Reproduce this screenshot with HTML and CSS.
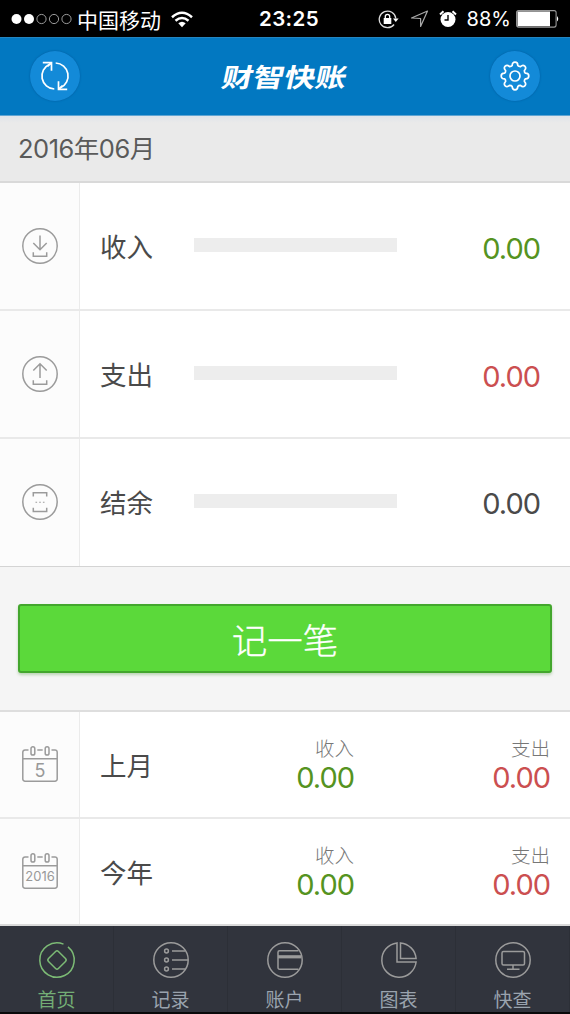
FILE: index.html
```html
<!DOCTYPE html>
<html lang="zh-CN">
<head>
<meta charset="utf-8">
<title>财智快账</title>
<link rel="stylesheet" href="styles.css">
</head>
<body>
<div class="app">
  <div class="status">
    <div class="status-left">
      <svg class="signal" width="62" height="12" viewBox="0 0 62 12"><g fill="#fff"><circle cx="5.500" cy="6" r="5"/><circle cx="18" cy="6" r="5"/></g><g fill="none" stroke="#aaa" stroke-width=".9"><circle cx="30.500" cy="6" r="4.600"/><circle cx="43" cy="6" r="4.600"/><circle cx="55.500" cy="6" r="4.600"/></g></svg>
      <span class="carrier">中国移动</span>
      <svg class="wifi" width="22" height="17" viewBox="0 0 22 17"><g fill="none" stroke="#fff" stroke-width="2.500"><path d="M1 6.200Q11-2.600 21 6.200"/><path d="M4.500 9.800Q11 4.300 17.500 9.800"/></g><path fill="#fff" d="M7.300 12.300Q11 9.300 14.700 12.300L11 16.200Z"/></svg>
    </div>
    <span class="clock">23:25</span>
    <div class="status-right">
      <svg width="21" height="19" viewBox="0 0 21 19"><path d="M16.100 14.500A8.300 8.300 0 1 1 17.800 8.500" fill="none" stroke="#ddd" stroke-width="1.300"/><path d="M15 8.500h5.600L17.800 12z" fill="#fff"/><rect x="5.700" y="8" width="7.600" height="6" fill="#fff"/><path d="M7.300 8V6.500a2.200 2.200 0 0 1 4.400 0V8" fill="none" stroke="#fff" stroke-width="1.300"/></svg>
      <svg class="arrow" width="19" height="18" viewBox="0 0 19 18"><path d="M17.500 1 10.600 16.500V8.500L1.500 8z" fill="none" stroke="#aaa" stroke-width="1.200" stroke-linejoin="round"/></svg>
      <svg class="alarm" width="18" height="18" viewBox="0 0 18 18"><circle cx="9" cy="9.500" r="7.500" fill="#fff"/><path d="M1 4.500 4.500 1.200M17 4.500 13.500 1.200" stroke="#fff" stroke-width="2"/><path d="M9 5v5H5.500" fill="none" stroke="#000" stroke-width="1.400"/></svg>
      <span class="percent">88%</span>
      <svg class="battery" width="44" height="18" viewBox="0 0 44 18"><rect x=".6" y=".6" width="39.500" height="16.500" rx="2" fill="none" stroke="#999" stroke-width="1.100"/><rect x="1.500" y="1.500" width="32.500" height="14.700" fill="#fff"/><path d="M41 6q2.500 2.800 0 5.600z" fill="#fff"/></svg>
    </div>
  </div>

  <header class="header">
    <button class="round" aria-label="sync"><svg width="30" height="30" viewBox="0 0 30 30" fill="none" stroke="#fff" stroke-width="1.700"><path d="M9.500 3.200A13 13 0 0 0 14.300 28M20.500 26.800A13 13 0 0 0 15.700 2"/><path d="M2.800 1.700h8.700v8M27.200 28.300h-8.700v-8M11.500 1.700 7.500 5.500M18.500 28.300 22.500 24.500"/></svg></button>
    <h1 class="logo">财智快账</h1>
    <button class="round" aria-label="settings"><svg width="30" height="30" viewBox="0 0 30 30" fill="none" stroke="#fff" stroke-width="1.700" stroke-linejoin="round"><circle cx="15" cy="15" r="5"/><path d="M12.200 4.500Q12.200 1.200 15 1.200T17.800 4.500Q18.500 5.600 20.500 5.600Q22.900 3.300 24.800 5.200T24.400 9.500Q24.200 11.300 25.500 12.200Q28.800 12.200 28.800 15T25.500 17.800Q24.200 18.700 24.400 20.500Q26.700 22.900 24.800 24.800T20.500 24.400Q18.500 24.400 17.800 25.500Q17.800 28.800 15 28.800T12.200 25.500Q11.500 24.400 9.500 24.400Q7.100 26.700 5.200 24.800T5.600 20.500Q5.800 18.700 4.500 17.800Q1.200 17.800 1.200 15T4.500 12.200Q5.800 11.300 5.600 9.500Q3.300 7.100 5.200 5.200T9.500 5.600Q11.500 5.600 12.200 4.500Z"/></svg></button>
  </header>

  <div class="month">2016年06月</div>

  <section class="summary">
    <div class="row">
      <div class="cell-icon"><svg class="icon" viewBox="0 0 36 36"><circle cx="18" cy="18" r="17.200"/><path d="M18 7.500v14M11.300 15l6.700 6.700 6.700-6.700M11.300 24.300v3.900h13.400v-3.900"/></svg></div>
      <span class="label">收入</span><div class="bar"></div><span class="amount green">0.00</span>
    </div>
    <div class="row">
      <div class="cell-icon"><svg class="icon" viewBox="0 0 36 36"><circle cx="18" cy="18" r="17.200"/><path d="M18 22V7.800M11.300 14.500 18 7.800l6.700 6.700M11.300 24.300v3.900h13.400v-3.900"/></svg></div>
      <span class="label">支出</span><div class="bar"></div><span class="amount red">0.00</span>
    </div>
    <div class="row">
      <div class="cell-icon"><svg class="icon" viewBox="0 0 36 36"><circle cx="18" cy="18" r="17.200"/><path d="M11.300 12.500V8.800h13.400v3.700M11.300 23.800v3.700h13.400v-3.700"/><path d="M13.500 18.200h1.600m2.100 0h1.600m2.100 0h1.600" stroke-width="1.100"/></svg></div>
      <span class="label">结余</span><div class="bar"></div><span class="amount">0.00</span>
    </div>
  </section>

  <div class="action"><button class="add">记一笔</button></div>

  <section class="history">
    <div class="row">
      <div class="cell-icon"><svg class="icon" viewBox="0 0 36 36"><path d="M6.500 4H3a2.200 2.200 0 0 0-2.200 2.200V33A2.200 2.200 0 0 0 3 35.200h30a2.200 2.200 0 0 0 2.200-2.200V6.200A2.200 2.200 0 0 0 33 4h-3.500M15.300 4h5.400M1 12.700h34"/><rect x="9" y=".8" width="3.800" height="8.300" rx="1.900"/><rect x="23.200" y=".8" width="3.800" height="8.300" rx="1.900"/><text x="18" y="30.500" font-size="18">5</text></svg></div>
      <span class="label">上月</span>
      <div class="stat"><span class="caption">收入</span><span class="amount green">0.00</span></div>
      <div class="stat"><span class="caption">支出</span><span class="amount red">0.00</span></div>
    </div>
    <div class="row">
      <div class="cell-icon"><svg class="icon" viewBox="0 0 36 36"><path d="M6.500 4H3a2.200 2.200 0 0 0-2.200 2.200V33A2.200 2.200 0 0 0 3 35.200h30a2.200 2.200 0 0 0 2.200-2.200V6.200A2.200 2.200 0 0 0 33 4h-3.500M15.300 4h5.400M1 12.700h34"/><rect x="9" y=".8" width="3.800" height="8.300" rx="1.900"/><rect x="23.200" y=".8" width="3.800" height="8.300" rx="1.900"/><text x="18" y="28" font-size="13">2016</text></svg></div>
      <span class="label">今年</span>
      <div class="stat"><span class="caption">收入</span><span class="amount green">0.00</span></div>
      <div class="stat"><span class="caption">支出</span><span class="amount red">0.00</span></div>
    </div>
  </section>

  <nav class="tabs">
    <a class="tab active"><svg class="icon" viewBox="0 0 36 36"><path d="M24.500 2.100A17.200 17.200 0 1 0 29 4.800"/><rect x="11" y="11" width="14" height="14" rx="2" transform="rotate(45 18 18)"/></svg><span>首页</span></a>
    <a class="tab"><svg class="icon" viewBox="0 0 36 36"><circle cx="18" cy="18" r="17.200"/><circle cx="13.500" cy="9" r="1.900"/><circle cx="13.500" cy="18" r="1.900"/><circle cx="13.500" cy="27" r="1.900"/><path d="M19 9h13M19 18h16M19 27h13"/></svg><span>记录</span></a>
    <a class="tab"><svg class="icon" viewBox="0 0 36 36"><circle cx="18" cy="18" r="17.200"/><path d="M31.500 8.800H12.500a1.500 1.500 0 0 0-1.500 1.500v15.400a1.500 1.500 0 0 0 1.500 1.500h19"/><path d="M11 14.800h23.500" stroke-width="3.200"/></svg><span>账户</span></a>
    <a class="tab"><svg class="icon" viewBox="0 0 36 36"><path d="M16 .9A17.200 17.200 0 1 0 35.100 20H16Z"/><path d="M19.500.9A17.200 17.200 0 0 1 35.100 16.500H19.500Z"/></svg><span>图表</span></a>
    <a class="tab"><svg class="icon" viewBox="0 0 36 36"><circle cx="18" cy="18" r="17.200"/><rect x="7" y="9.500" width="22.500" height="13.500" rx="1.500"/><path d="M18 23v4M12 27.200h12.500"/></svg><span>快查</span></a>
  </nav>
</div>
</body>
</html>
```

FILE: styles.css
```css
* { box-sizing: border-box; }
body {
  margin: 0;
  background: #000;
  font-family: "Noto Sans CJK SC", sans-serif;
  color: #4a4a4a;
}
button { border: 0; padding: 0; font: inherit; color: inherit; }
svg { display: block; flex: none; }
.app {
  width: 570px;
  height: 1014px;
  display: flex;
  flex-direction: column;
  overflow: hidden;
  background: #f5f5f5;
  border-bottom: 2px solid #08080a;
}

.status {
  flex: none;
  height: 37px;
  padding: 1px 10px 0 11px;
  display: grid;
  grid-template-columns: 248px auto 1fr;
  align-items: center;
  background: #000;
  color: #fff;
}
.status-left, .status-right { display: flex; align-items: center; }
.status-right { justify-content: flex-end; }
.carrier { margin-left: 4px; padding-bottom: 1px; font-size: 21px; line-height: 28px; }
.wifi { margin-left: 10px; }
.clock { font: 600 20.500px/30px Inter, sans-serif; letter-spacing: .4px; }
.arrow { margin-left: 11px; }
.alarm { margin-left: 10px; }
.percent { margin-left: 10px; font: 400 20px/30px Inter, sans-serif; }
.battery { margin-left: 5px; }

.header {
  flex: none;
  height: 78px;
  padding: 0 30px 2px;
  display: flex;
  align-items: center;
  justify-content: space-between;
  background: #0278c1;
  border-top: 1px solid #2385c0;
}
.round {
  width: 50px;
  height: 50px;
  border-radius: 50%;
  display: grid;
  place-items: center;
  background: #138ad8;
  box-shadow: 0 0 2px #04599a;
}
.logo {
  margin: 0;
  color: #fff;
  font: 700 26px/36px "Noto Sans CJK SC", sans-serif;
  transform: scaleX(1.2) skewX(-10deg);
}

.month {
  flex: none;
  height: 68px;
  padding: 0 18px;
  border-top: 1px solid #5fa5d3;
  border-bottom: 2px solid #d9d9d9;
  background: linear-gradient(#dfe4ea, #eaeaea 7px);
  font-family: Inter, "Noto Sans CJK SC", sans-serif;
  font-size: 25.500px;
  font-weight: 400;
  letter-spacing: -.5px;
  line-height: 66px;
  color: #5a5a5a;
}

.row {
  display: flex;
  align-items: stretch;
  background: #fff;
  border-bottom: 2px solid #e9e9e9;
}
.summary .row { height: 128px; }
.summary .row:last-child { border-bottom: 1px solid #d4d4d4; }
.summary .row:last-child > * { padding-bottom: 2px; }
.cell-icon {
  width: 80px;
  flex: none;
  display: grid;
  place-items: center;
  background: #fcfcfc;
  border-right: 1px solid #ebebeb;
}
.history .cell-icon { padding-bottom: 1px; }
.icon {
  width: 36px;
  height: 36px;
  overflow: visible;
  fill: none;
  stroke: #9b9b9b;
  stroke-width: 1.500;
}
.icon text {
  fill: #999;
  stroke: none;
  text-anchor: middle;
  font-family: Inter, sans-serif;
}
.label {
  align-self: center;
  width: 94px;
  padding-left: 20px;
  font-size: 26.500px;
  line-height: 40px;
}
.bar { align-self: center; width: 203px; height: 14px; margin: 0 0 3px 20px; background: #ededed; }
.amount {
  font: 400 29px/34px Inter, sans-serif;
  letter-spacing: -1px;
}
.summary .amount { align-self: center; margin-left: auto; padding: 5px 30px 0 0; }
.green { color: #559321; }
.red { color: #cb4f50; }

.action {
  flex: none;
  height: 145px;
  padding: 37px 18px 0;
  border-bottom: 2px solid #dedede;
}
.add {
  display: block;
  width: 100%;
  height: 69px;
  border: 2px solid #43a62d;
  border-radius: 3px;
  background: #5bd93a;
  box-shadow: 0 2px 3px #bcd4b5;
  color: #fff;
  font-size: 35.500px;
  font-weight: 300;
  line-height: 62px;
  -webkit-text-stroke: .3px #fff;
}

.history .row { height: 107px; }
.history .row:last-child { border-bottom-color: #dadada; }
.stat {
  display: flex;
  flex-direction: column;
  align-items: flex-end;
  width: 196px;
  padding-top: 21px;
}
.label + .stat { width: 180px; }
.stat .amount { line-height: 30px; }
.caption { font-size: 19.500px; font-weight: 300; line-height: 30px; color: #777; }

.tabs {
  flex: none;
  height: 88px;
  display: grid;
  grid-template-columns: repeat(5, 1fr);
  background: #31343d;
}
.tab {
  display: flex;
  flex-direction: column;
  align-items: center;
  padding-top: 16px;
  border-right: 1px solid #2c2f37;
  color: #9aa3ae;
  font-size: 19px;
  line-height: 28px;
}
.tab span { margin-top: 7px; }
.tab.active { color: #73ad75; }
.tab.active .icon { stroke: #7cba75; }
```
